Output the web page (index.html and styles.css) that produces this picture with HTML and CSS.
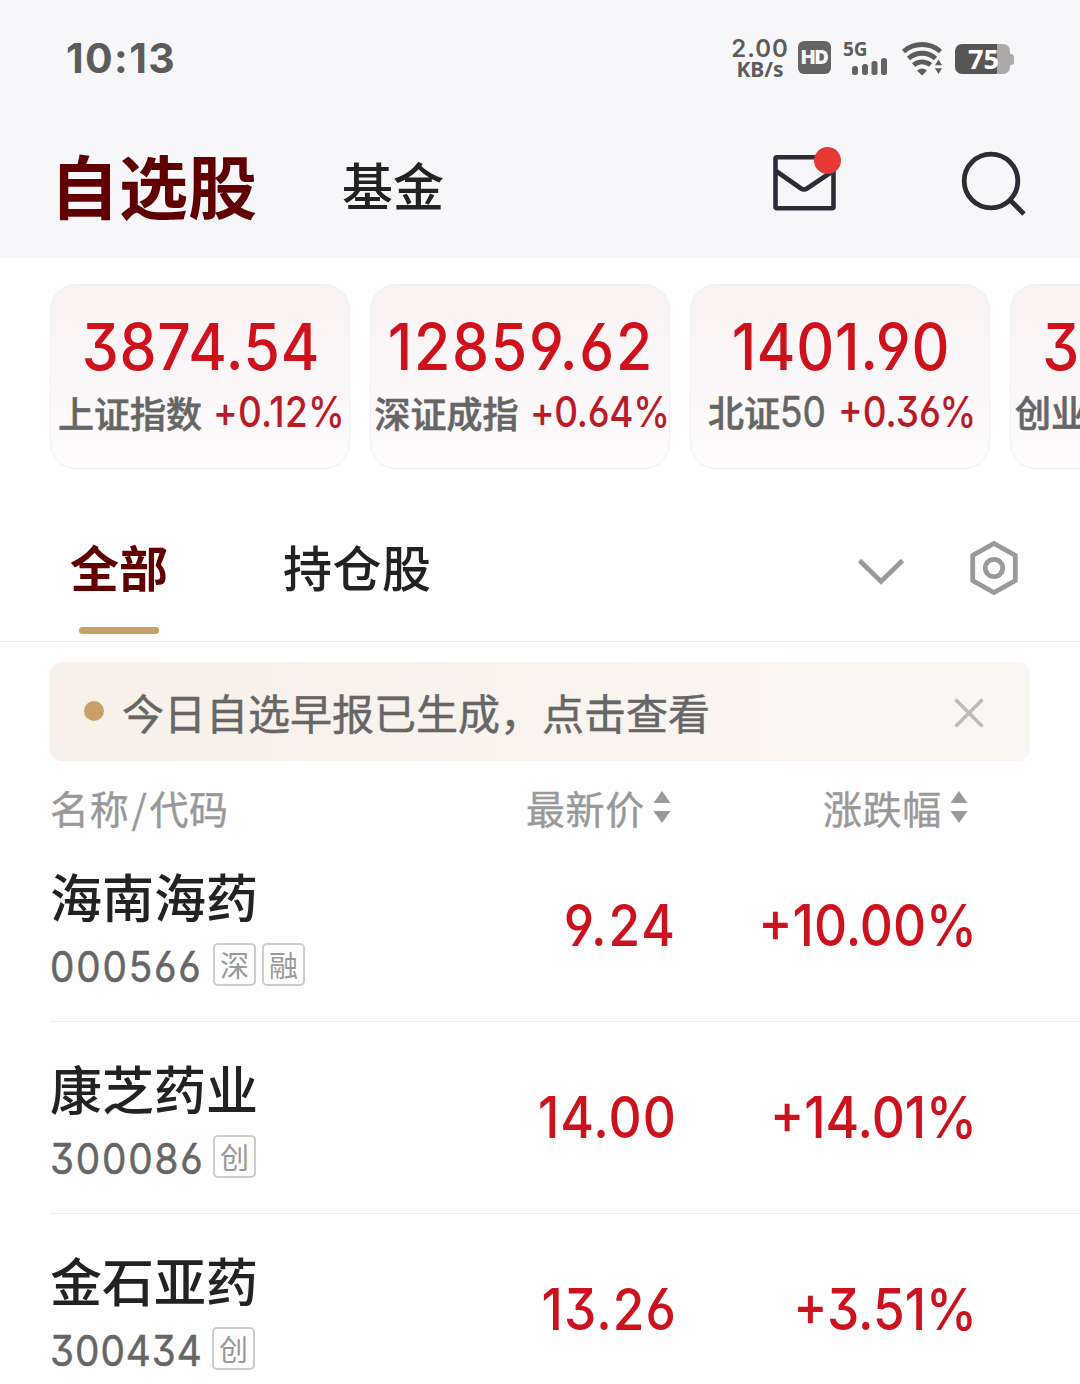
FILE: index.html
```html
<!DOCTYPE html>
<html lang="zh-CN">
<head>
<meta charset="utf-8">
<title>自选股</title>
<link rel="stylesheet" href="styles.css">
</head>
<body>
<header class="top">
  <div class="status">
    <span class="clock">10:13</span>
    <div class="status-icons">
      <div class="speed"><span class="rate">2.00</span><span class="unit">KB/s</span></div>
      <span class="hd">HD</span>
      <div class="cell">
        <span class="gen">5G</span>
        <svg class="bars" width="36" height="18" viewBox="0 0 36 18" fill="#646464"><rect x="0" y="9" width="6" height="9" rx="2.5"/><rect x="10" y="7" width="6" height="11" rx="2.5"/><rect x="19.500" y="4" width="6" height="14" rx="2.500"/><rect x="29" y="1" width="6" height="17" rx="2.500"/></svg>
      </div>
      <svg class="wifi" width="42" height="34" viewBox="0 0 42 34"><g fill="none" stroke="#5c5c5c" stroke-width="4.800"><path d="M1.500 10.500A28 28 0 0 1 38.500 10.500"/><path d="M6.500 17.500A20 20 0 0 1 33.500 17.500"/><path d="M11.500 24A13 13 0 0 1 28.500 24"/></g><path d="M15 29.500q5-4 10 0l-5 5z" fill="#5c5c5c"/><path d="M36.500 17l5 8h-10zM36.500 34.500l5-8h-10z" fill="#5c5c5c" stroke="#f7f7f9" stroke-width="1.500"/></svg>
      <div class="battery"><span class="level">75</span></div>
    </div>
  </div>
  <nav class="title-bar">
    <h1 class="title">自选股</h1>
    <span class="fund">基金</span>
    <svg class="mail" width="70" height="66" viewBox="0 0 70 66"><rect x="3.500" y="10.200" width="58" height="51" rx="1.500" fill="none" stroke="#2a2d37" stroke-width="4.600"/><path d="M4 24L29 41.500Q32 43.500 35 41.500L61 24" fill="none" stroke="#2a2d37" stroke-width="4.600"/><circle cx="55.500" cy="13.500" r="13.500" fill="#e73a35"/></svg>
    <svg class="search" width="68" height="68" viewBox="0 0 68 68" fill="none" stroke="#2a2d37" stroke-width="4.800"><circle cx="31" cy="32" r="26.800"/><path d="M49.500 50.500L64 65"/></svg>
  </nav>
</header>

<section class="indices">
  <article class="index"><div class="value v1">3874.54</div><div class="detail"><span class="label">上证指数</span><span class="delta d1">+0.12%</span></div></article>
  <article class="index"><div class="value v2">12859.62</div><div class="detail"><span class="label">深证成指</span><span class="delta d2">+0.64%</span></div></article>
  <article class="index"><div class="value v3">1401.90</div><div class="detail"><span class="label">北证<span class="num">50</span></span><span class="delta">+0.36%</span></div></article>
  <article class="index"><div class="value v4">3</div><div class="detail last"><span class="label">创业</span></div></article>
</section>

<nav class="tabs">
  <span class="tab active">全部</span>
  <span class="tab hold">持仓股</span>
  <svg class="chevron" width="48" height="28" viewBox="0 0 48 28" fill="none" stroke="#999" stroke-width="4.600"><path d="M2.500 2.500L24 23.500L45.500 2.500"/></svg>
  <svg class="settings" width="50" height="56" viewBox="0 0 50 56" fill="none" stroke="#999" stroke-width="4.800"><path d="M25 3.500L46.300 15.500V40.500L25 52.500L3.700 40.500V15.500Z"/><circle cx="25" cy="28" r="8.700"/></svg>
</nav>

<div class="notice">
  <i class="dot"></i>
  <span class="notice-text">今日自选早报已生成，点击查看</span>
  <svg class="close" width="30" height="30" viewBox="0 0 30 30" fill="none" stroke="#bbb" stroke-width="3.600"><path d="M1.500 1.500L28.500 28.500M28.500 1.500L1.500 28.500"/></svg>
</div>

<main>
  <div class="columns">
    <span class="col-name">名称<span class="slash">/</span>代码</span>
    <span class="col-price">最新价<svg class="sort" width="18" height="34" viewBox="0 0 18 34" fill="#999"><path d="M9 1L17.500 13H.500zM9 33L17.500 21H.500z"/></svg></span>
    <span class="col-change">涨跌幅<svg class="sort" width="18" height="34" viewBox="0 0 18 34" fill="#999"><path d="M9 1L17.500 13H.500zM9 33L17.500 21H.500z"/></svg></span>
  </div>
  <div class="stock">
    <div class="info"><div class="name">海南海药</div><div class="meta"><span class="code">000566</span><span class="tag">深</span><span class="tag">融</span></div></div>
    <span class="price wide">9.24</span><span class="change">+10.00%</span>
  </div>
  <div class="stock">
    <div class="info"><div class="name">康芝药业</div><div class="meta"><span class="code">300086</span><span class="tag">创</span></div></div>
    <span class="price">14.00</span><span class="change">+14.01%</span>
  </div>
  <div class="stock">
    <div class="info"><div class="name">金石亚药</div><div class="meta"><span class="code narrow">300434</span><span class="tag">创</span></div></div>
    <span class="price">13.26</span><span class="change">+3.51%</span>
  </div>
</main>
</body>
</html>
```
FILE: styles.css
```css
* { box-sizing: border-box; }
body {
  margin: 0;
  height: 1384px;
  overflow: hidden;
  background: #fefefe;
  color: #222;
  font-family: "Noto Sans CJK SC", sans-serif;
  white-space: nowrap;
}
svg { display: block; flex: none; overflow: visible; }

.top { height: 258px; background: #f7f7f9; }
.status {
  height: 115px;
  padding: 0 66px;
  display: flex;
  align-items: center;
  justify-content: space-between;
  color: #5c5c5c;
  font-family: "Noto Sans", sans-serif;
  font-weight: 700;
}
.clock { font: 700 41px/60px Inter, sans-serif; letter-spacing: 1.4px; }
.status-icons { display: flex; align-items: center; }
.speed { width: 58px; display: flex; flex-direction: column; align-items: center; }
.rate { font: 600 24px/21px Inter, sans-serif; letter-spacing: 1px; padding-top: 3px; }
.unit { font-size: 21px; line-height: 21px; }
.hd {
  width: 33px;
  height: 33px;
  margin-left: 9px;
  border-radius: 6px;
  background: #646464;
  color: #f7f7f9;
  font: 900 19px/33px Inter, sans-serif;
  text-align: center;
  letter-spacing: -0.5px;
}
.cell { width: 45px; height: 36px; margin-left: 12px; display: flex; flex-direction: column; }
.gen { font-size: 19px; line-height: 18px; height: 17px; }
.bars { margin-left: 9px; }
.wifi { margin-left: 14px; }
.battery {
  position: relative;
  width: 55px;
  height: 30px;
  margin: 2px 4px 0 11px;
  border-radius: 7px;
  background: linear-gradient(90deg, #555 42px, #aaa 42px);
}
.battery::after {
  content: "";
  position: absolute;
  left: 55px;
  top: 10px;
  width: 4px;
  height: 11px;
  border-radius: 0 3px 3px 0;
  background: #aaa;
}
.level { display: block; padding-left: 13px; color: #fff; font-size: 27px; line-height: 30px; }

.title-bar { height: 143px; padding-left: 50px; display: flex; align-items: flex-start; }
.title {
  width: 292px;
  margin: 21px 0 0;
  color: #600000;
  font-size: 69px;
  line-height: 96px;
  font-weight: 700;
}
.fund { width: 430px; margin-top: 21px; font-size: 51px; line-height: 96px; font-weight: 500; }
.mail { margin-top: 32px; }
.search { margin: 34px 0 0 118px; }

.indices { height: 211px; padding: 26px 0 0 50px; display: flex; gap: 20px; overflow: hidden; }
.index {
  flex: none;
  width: 300px;
  height: 185px;
  padding-top: 25px;
  border: 1px solid #efeff2;
  border-radius: 26px;
  background: linear-gradient(#f9f2f3, #fdfbfc);
}
.value {
  color: #cf111c;
  font: 500 64px/74px Inter, sans-serif;
  font-feature-settings: "cv09", "cv03", "cv04";
  text-align: center;
  transform: scaleX(0.92);
}
.v1 { padding-left: 2px; letter-spacing: 0.8px; }
.v2 { padding-left: 2px; letter-spacing: 1.9px; }
.v3 { padding-left: 2px; letter-spacing: 0.8px; }
.v4 { padding-left: 34px; text-align: left; transform-origin: 0 0; }
.detail { padding-left: 2px; display: flex; align-items: center; justify-content: center; gap: 11px; line-height: 54px; }
.last { justify-content: flex-start; padding-left: 4px; }
.label { color: #666; font-size: 36px; font-weight: 500; -webkit-text-stroke: 0.6px #666; }
.num { font: 400 42px/54px Inter, sans-serif; display: inline-block; width: 47px; transform: scaleX(0.88); transform-origin: 0 0; }
.delta {
  width: 136px;
  padding-top: 1px;
  color: #b91c27;
  font: 500 42px/54px Inter, sans-serif;
  font-feature-settings: "cv09", "cv03", "cv04";
  transform: scaleX(0.88);
  transform-origin: 0 0;
}
.d1 { width: 131px; letter-spacing: 0.3px; }
.d2 { width: 138px; letter-spacing: -0.4px; }

.tabs { height: 173px; padding: 51px 0 0 70px; display: flex; border-bottom: 1px solid #ebebeb; }
.tab { font-size: 49px; line-height: 92px; font-weight: 500; }
.active { width: 213px; color: #600000; font-weight: 700; }
.active::after {
  content: "";
  display: block;
  width: 80px;
  height: 7px;
  margin: 15px 0 0 9px;
  border-radius: 4px;
  background: #c8a068;
}
.hold { width: 574px; letter-spacing: 0.5px; }
.chevron { margin-top: 38px; }
.settings { margin: 20px 0 0 64px; }

.notice {
  height: 99px;
  margin: 20px 50px 0;
  padding: 0 46px 0 34px;
  display: flex;
  align-items: center;
  border-radius: 12px;
  background: linear-gradient(90deg, #f8f0e9, #faf7f1);
}
.dot { width: 20px; height: 20px; margin-bottom: 1px; border-radius: 50%; background: #c8a068; }
.notice-text { margin: 0 auto 0 18px; color: #666; font-size: 42px; line-height: 60px; -webkit-text-stroke: 0.5px #666; }
.close { margin-top: 2px; }

.columns {
  height: 68px;
  margin-top: 12px;
  padding-left: 50px;
  display: grid;
  grid-template-columns: 320px 301px 297px;
  align-items: center;
  color: #999;
  font-size: 39px;
  line-height: 60px;
  letter-spacing: 0.7px;
  -webkit-text-stroke: 0.4px #999;
}
.slash { margin: 0 2px; }
.col-price, .col-change { display: flex; align-items: center; justify-content: flex-end; gap: 8px; }
.stock {
  height: 192px;
  margin-left: 50px;
  padding-top: 16px;
  display: grid;
  grid-template-columns: 320px 307px 300px;
  border-bottom: 1px solid #ebebeb;
}
.columns + .stock { height: 181px; padding-top: 5px; }
.name { font-size: 52px; line-height: 100px; height: 90px; font-weight: 500; }
.meta { display: flex; align-items: center; height: 56px; }
.code {
  width: 163px;
  padding-top: 3px;
  color: #666;
  font: 400 43px/56px Inter, sans-serif;
  font-feature-settings: "cv09", "cv03", "cv04";
  letter-spacing: 2px;
  transform: scaleX(0.9);
  transform-origin: 0 0;
  -webkit-text-stroke: 0.5px #666;
}
.narrow { width: 162px; letter-spacing: 1.1px; }
.tag {
  width: 43px;
  height: 43px;
  margin-right: 6px;
  border: 2px solid #ccc;
  border-radius: 5px;
  color: #999;
  font-size: 29px;
  line-height: 38px;
  text-align: center;
}
.price, .change {
  padding-top: 38px;
  color: #cb121d;
  font: 500 57px/84px Inter, sans-serif;
  font-feature-settings: "cv09", "cv03", "cv04";
  text-align: right;
  transform: scaleX(0.9);
  transform-origin: 100% 0;
}
.price { letter-spacing: 1.2px; }
.wide { letter-spacing: 2.2px; }
```
